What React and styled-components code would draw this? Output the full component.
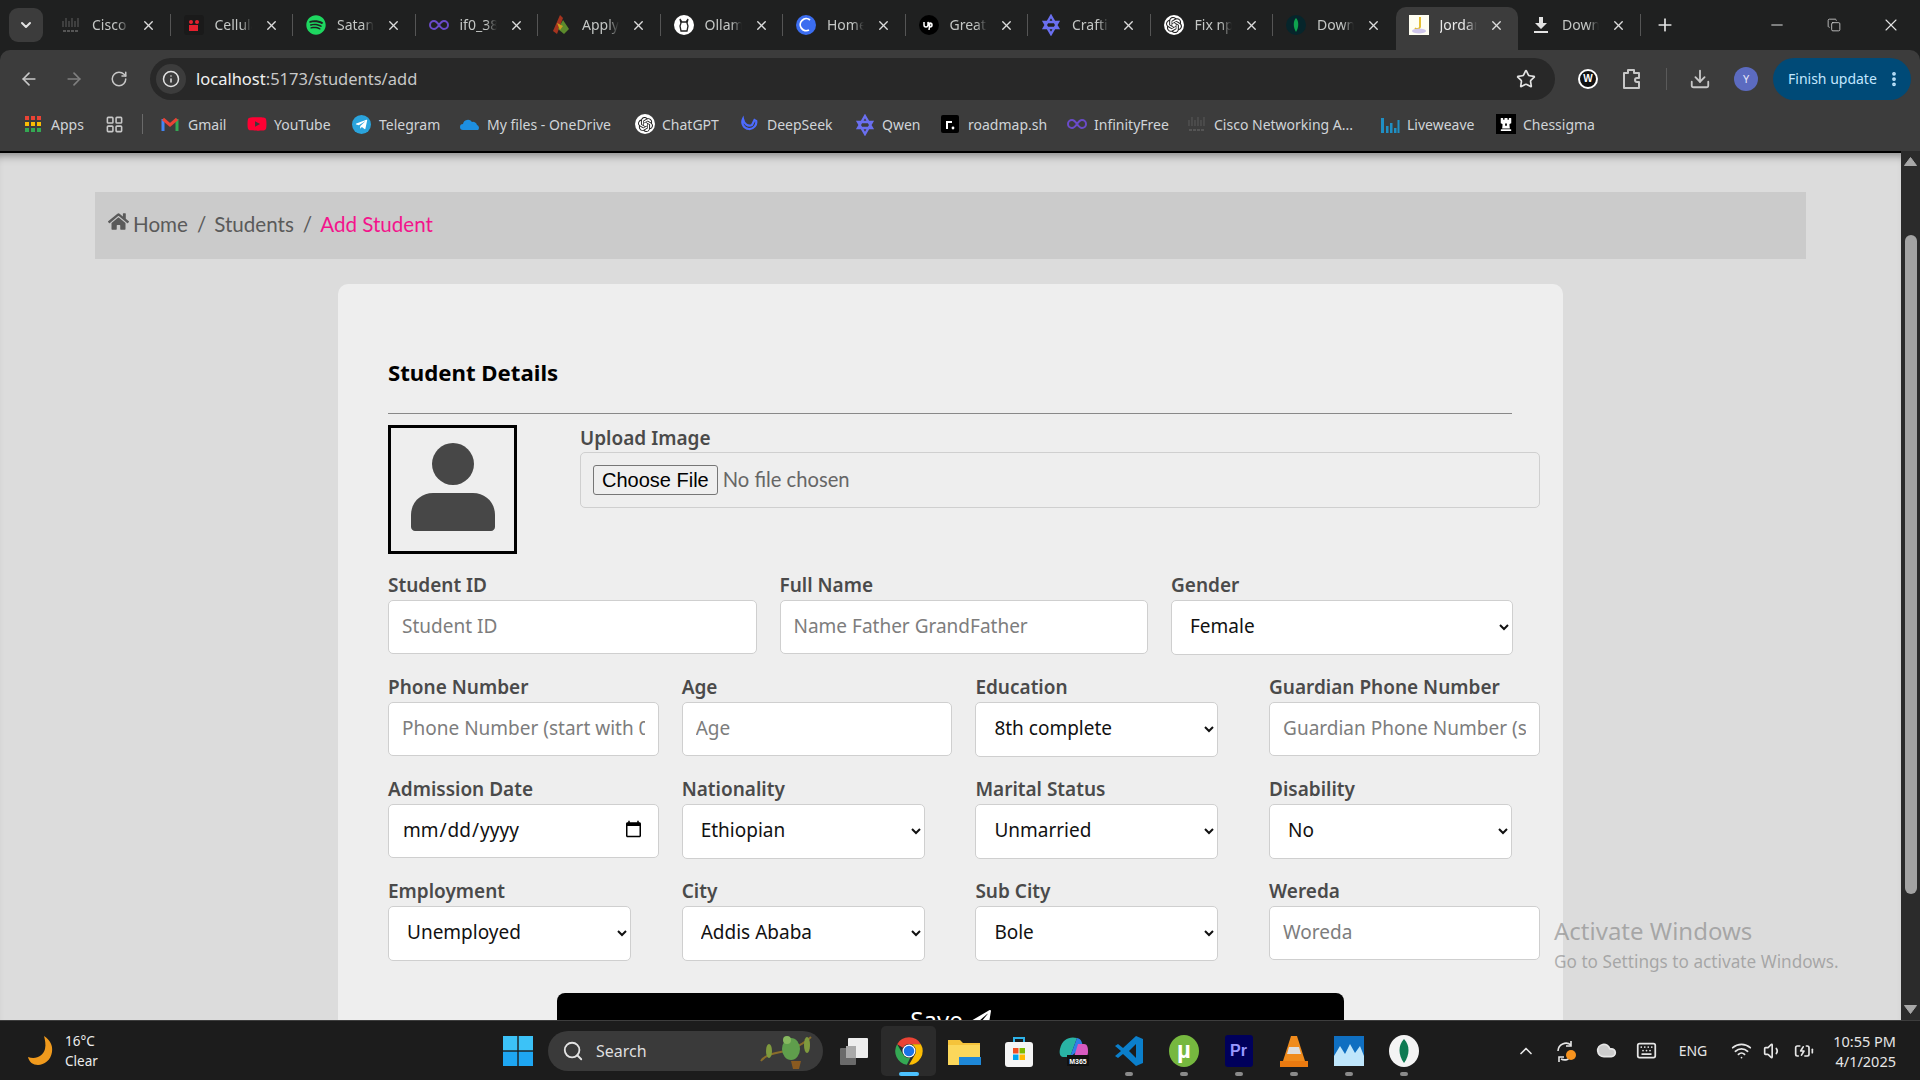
import React from "react";
import styled, { createGlobalStyle } from "styled-components";
import {
  ArrowLeft,
  ArrowRight,
  RotateCw,
  Info,
  Star,
  Download,
  EllipsisVertical,
  Minus,
  Copy,
  X,
  Plus,
  ChevronDown,
  ChevronUp,
  Search,
  Wifi,
  Volume1,
  Keyboard,
  Cloud,
  BatteryCharging,
  LayoutGrid,
} from "lucide-react";
import { FaHome, FaPaperPlane, FaSpotify, FaTelegramPlane, FaChessRook, FaYoutube } from "react-icons/fa";
import { SiOpenai } from "react-icons/si";

const Cisco = () => (
  <svg width="20" height="20" viewBox="0 0 20 20" stroke="#555" strokeWidth="1.2">
    {[2, 5, 8, 11, 14, 17].map((x, i) => (
      <line key={x} x1={x} x2={x} y1={i % 2 ? 3 : 6} y2="12" />
    ))}
    <line x1="2" x2="17" y1="16" y2="16" strokeDasharray="3 1" strokeWidth="2" />
  </svg>
);
const Cell = () => (
  <svg width="20" height="20" viewBox="0 0 20 20">
    <rect width="20" height="20" rx="3" fill="#1a1a1a" />
    <circle cx="7" cy="7" r="2" fill="#e5202e" />
    <circle cx="13" cy="7" r="2" fill="#e5202e" />
    <rect x="5" y="10" width="9" height="6" fill="#e5202e" />
  </svg>
);
const Infinity8 = () => (
  <svg width="20" height="20" viewBox="0 0 20 20" fill="none" stroke="#6a4bc9" strokeWidth="2">
    <path d="M10 10c-2-3-3-4-5-4a4 4 0 0 0 0 8c2 0 3-1 5-4s3-4 5-4a4 4 0 0 1 0 8c-2 0-3-1-5-4z" />
  </svg>
);
const ApplyLogo = () => (
  <svg width="20" height="22" viewBox="0 0 20 22">
    <path d="M9 1l3 3-6 16-4-3z" fill="#a5341f" />
    <path d="M12 6l6 9-5 5-6-5z" fill="#5c8a2c" />
    <path d="M6 9l6 3-3 4z" fill="#c9a020" />
  </svg>
);
const Ollama = () => (
  <svg width="20" height="20" viewBox="0 0 20 20">
    <circle cx="10" cy="10" r="10" fill="#fff" />
    <path d="M6 4l1 4-1 3 1 5h6l1-5-1-3 1-4-2 3H8z" fill="none" stroke="#222" strokeWidth="1.3" />
  </svg>
);
const Cohere = () => (
  <svg width="20" height="20" viewBox="0 0 20 20">
    <circle cx="10" cy="10" r="10" fill="#3b6df0" />
    <path d="M14 5a6 6 0 1 0-1 10" fill="none" stroke="#fff" strokeWidth="1.8" />
  </svg>
);
const Upwork = () => (
  <svg width="20" height="20" viewBox="0 0 20 20">
    <circle cx="10" cy="10" r="10" fill="#000" />
    <path d="M5 7v3a2 2 0 0 0 4 0V7l2 5a2 2 0 1 0 0-4l-1 7" fill="none" stroke="#fff" strokeWidth="1.5" />
  </svg>
);
const Qwen = () => (
  <svg width="20" height="22" viewBox="0 0 20 22" fill="none" stroke="#6a6ff0" strokeWidth="2.4">
    <path d="M10 2l7 12H3zM3 8h14l-7 12z" />
  </svg>
);
const Mongo = ({ size = 20, bg = "#06252b" }) => (
  <svg width={size} height={size} viewBox="0 0 20 20">
    <circle cx="10" cy="10" r="10" fill={bg} />
    <path d="M10 3c3 3 3 9 0 14c-3-5-3-11 0-14z" fill="#0fa34f" />
  </svg>
);
const Jordan = () => (
  <svg width="20" height="20" viewBox="0 0 20 20">
    <rect width="20" height="20" fill="#fffef2" />
    <path d="M11 2v10a3 3 0 0 1-5 1" fill="none" stroke="#e2b81f" strokeWidth="1.8" />
    <ellipse cx="10" cy="16" rx="7" ry="2.5" fill="#cfc6ea" />
  </svg>
);
const DownFav = () => (
  <svg width="20" height="20" viewBox="0 0 20 20" fill="#e3e3e3">
    <path d="M8 2h4v6h4l-6 6-6-6h4z" />
    <rect x="3" y="16" width="14" height="2" />
  </svg>
);

const tabs = [
  { title: "Cisco", icon: <Cisco /> },
  { title: "Cellular", icon: <Cell /> },
  { title: "Satan", icon: <FaSpotify size={20} color="#1ed760" /> },
  { title: "if0_38", icon: <Infinity8 /> },
  { title: "Apply", icon: <ApplyLogo /> },
  { title: "Ollama", icon: <Ollama /> },
  { title: "Home", icon: <Cohere /> },
  { title: "Great", icon: <Upwork /> },
  { title: "Crafting", icon: <Qwen /> },
  { title: "Fix npm", icon: <ChatGptFav><SiOpenai size={16} color="#222" /></ChatGptFav> },
  { title: "Down", icon: <Mongo />, plain: true },
  { title: "Jordan", icon: <Jordan />, active: true },
  { title: "Down", icon: <DownFav /> },
];

function ChatGptFav({ children }) {
  return <ChatGptDisc>{children}</ChatGptDisc>;
}

const AppsDots = () => (
  <svg width="18" height="18" viewBox="0 0 18 18">
    {[0, 1, 2].map((r) =>
      [0, 1, 2].map((c) => (
        <rect key={`${r}${c}`} x={1 + c * 6} y={1 + r * 6} width="4" height="4" fill={["#ea4335", "#fbbc04", "#34a853"][r]} />
      ))
    )}
  </svg>
);
const Gmail = () => (
  <svg width="18" height="18" viewBox="0 0 18 18" fill="none" strokeWidth="3">
    <path d="M2 16V4" stroke="#4285f4" />
    <path d="M16 16V4" stroke="#34a853" />
    <path d="M2 4l7 6 7-6" stroke="#ea4335" />
  </svg>
);
const OneDrive = () => (
  <svg width="20" height="16" viewBox="0 0 20 16">
    <path d="M3 14a3 3 0 0 1 0-6 5 5 0 0 1 9-2 4 4 0 0 1 5 3 3 3 0 0 1 1 5z" fill="#1d8fe1" />
  </svg>
);
const DeepSeek = () => (
  <svg width="18" height="18" viewBox="0 0 18 18" fill="none" stroke="#4d6bfe" strokeWidth="2.2">
    <path d="M16 5a7 7 0 1 1-13-1c1 5 5 8 9 6l3-6" />
  </svg>
);
const Roadmap = () => (
  <svg width="18" height="18" viewBox="0 0 18 18">
    <rect width="18" height="18" rx="2" fill="#000" />
    <path d="M6 14V7h5" fill="none" stroke="#fff" strokeWidth="2" />
    <circle cx="12" cy="13" r="1.4" fill="#fff" />
  </svg>
);
const Liveweave = () => (
  <svg width="20" height="18" viewBox="0 0 20 18" fill="#1f8fc4">
    <rect x="1" y="3" width="3" height="15" />
    <rect x="6" y="11" width="2.5" height="7" />
    <rect x="10" y="8" width="2.5" height="10" />
    <rect x="14" y="13" width="2.5" height="5" />
    <rect x="17.5" y="5" width="2" height="13" />
  </svg>
);
const ExtensionIcon = () => (
  <svg width="22" height="24" viewBox="0 0 22 24" fill="none" stroke="#c7c7c7" strokeWidth="2" strokeLinejoin="round">
    <path d="M3 6h4V3h6v3h5v5h-2a2 2 0 0 0 0 4h2v6H3z" />
  </svg>
);
const SyncIcon = () => (
  <svg width="22" height="24" viewBox="0 0 22 24" fill="none" stroke="#e6e6e6" strokeWidth="1.6">
    <path d="M3 12a8 8 0 0 1 13-6M16 2v5h-5" />
    <path d="M17 16a8 8 0 0 1-11 4M4 23v-5h5" />
    <circle cx="16" cy="16" r="5" fill="#f7931e" stroke="none" />
  </svg>
);
const TriangleUp = () => (
  <svg width="13" height="9" viewBox="0 0 13 9" fill="#a8a8a8">
    <path d="M6.5 0.5L12.5 8.5H0.5z" strokeLinejoin="round" stroke="#a8a8a8" />
  </svg>
);
const TriangleDown = () => (
  <svg width="13" height="9" viewBox="0 0 13 9" fill="#a8a8a8">
    <path d="M6.5 8.5L12.5 0.5H0.5z" strokeLinejoin="round" stroke="#a8a8a8" />
  </svg>
);

const bookmarks = [
  { label: "Apps", width: 81, icon: <AppsDots /> },
  { width: 37, icon: <LayoutGrid size={19} color="#c7c7c7" /> },
  { divider: true, width: 19 },
  { label: "Gmail", width: 86, icon: <Gmail /> },
  { label: "YouTube", width: 105, icon: <FaYoutube size={20} color="#ff0033" /> },
  { label: "Telegram", width: 108, icon: <TelegramRound /> },
  { label: "My files - OneDrive", width: 175, icon: <OneDrive /> },
  { label: "ChatGPT", width: 105, icon: <ChatGptFav><SiOpenai size={15} color="#222" /></ChatGptFav> },
  { label: "DeepSeek", width: 115, icon: <DeepSeek /> },
  { label: "Qwen", width: 86, icon: <Qwen /> },
  { label: "roadmap.sh", width: 126, icon: <Roadmap /> },
  { label: "InfinityFree", width: 120, icon: <Infinity8 /> },
  { label: "Cisco Networking A...", width: 193, icon: <Cisco /> },
  { label: "Liveweave", width: 116, icon: <Liveweave /> },
  { label: "Chessigma", width: 110, icon: <ChessMark /> },
];

function TelegramRound() {
  return <TelegramDisc><FaTelegramPlane size={13} color="#fff" /></TelegramDisc>;
}

function ChessMark() {
  return <ChessBox><FaChessRook size={14} /></ChessBox>;
}

const WinLogo = () => (
  <svg width="30" height="30" viewBox="0 0 30 30" fill="#3cc2f7">
    <rect width="14.3" height="14.3" />
    <rect x="15.7" width="14.3" height="14.3" />
    <rect y="15.7" width="14.3" height="14.3" fill="#1ea6f2" />
    <rect x="15.7" y="15.7" width="14.3" height="14.3" fill="#1ea6f2" />
  </svg>
);
const Moon = () => (
  <svg width="30" height="32" viewBox="0 0 30 32">
    <path d="M17 1c6 4 9 9 8 16-1 8-8 13-14 13C6 30 2 27 1 22c8 3 15-1 17-8 1-5 0-9-1-13z" fill="#f09a1d" />
  </svg>
);
const Frog = () => (
  <svg width="60" height="40" viewBox="0 0 60 40">
    <path d="M6 30C14 18 34 26 56 6" fill="none" stroke="#8a6d2a" strokeWidth="2" />
    <ellipse cx="14" cy="20" rx="3" ry="7" fill="#7f9a3e" />
    <ellipse cx="52" cy="14" rx="3" ry="8" fill="#7f9a3e" />
    <ellipse cx="36" cy="18" rx="9" ry="11" fill="#5f9e4c" />
    <circle cx="32" cy="9" r="4" fill="#86b85f" />
    <path d="M36 30h10l-2 8h-6z" fill="#8a5a20" />
  </svg>
);
const TaskView = () => (
  <svg width="30" height="30" viewBox="0 0 30 30">
    <rect x="1" y="12" width="16" height="17" rx="1" fill="#6a6a6a" />
    <rect x="9" y="2" width="20" height="20" rx="1" fill="#ededed" />
    <rect x="7" y="10" width="10" height="12" fill="#a9a9a9" />
  </svg>
);
const Chrome = () => (
  <svg width="30" height="30" viewBox="0 0 24 24">
    <path d="M12 1a11 11 0 0 1 9.5 5.5H12a5.5 5.5 0 0 0-4.8 2.8L2.5 6.5A11 11 0 0 1 12 1z" fill="#ea4335" />
    <path d="M2.5 6.5l4.8 8.3a5.5 5.5 0 0 0 5.7 2.6L10.3 23A11 11 0 0 1 2.5 6.5z" fill="#34a853" />
    <path d="M21.5 6.5H12a5.5 5.5 0 0 1 4.8 8.3L12 23a11 11 0 0 0 9.5-16.5z" fill="#fbbc04" />
    <circle cx="12" cy="12" r="5.2" fill="#fff" />
    <circle cx="12" cy="12" r="4.2" fill="#1a73e8" />
  </svg>
);
const Folder = () => (
  <svg width="34" height="30" viewBox="0 0 34 30">
    <path d="M1 4h12l3 3h17v22H1z" fill="#f5c33b" />
    <path d="M1 9h32v20H1z" fill="#fbd75b" />
    <rect x="12" y="21" width="22" height="8" fill="#1e88d8" />
  </svg>
);
const Store = () => (
  <svg width="30" height="32" viewBox="0 0 30 32">
    <path d="M10 8V3h10v5" fill="none" stroke="#2db2e8" strokeWidth="2" />
    <rect x="1" y="7" width="28" height="25" rx="3" fill="#f4f4f4" />
    <rect x="9" y="13" width="5.5" height="5.5" fill="#f25022" />
    <rect x="15.5" y="13" width="5.5" height="5.5" fill="#7fba00" />
    <rect x="9" y="19.5" width="5.5" height="5.5" fill="#00a4ef" />
    <rect x="15.5" y="19.5" width="5.5" height="5.5" fill="#ffb900" />
  </svg>
);
const Mini = styled.text`
  fill: #fff;
  font: 700 7px "Liberation Sans", sans-serif;
  text-anchor: middle;
`;
const M365 = () => (
  <svg width="32" height="32" viewBox="0 0 32 32">
    <path d="M2 14C4 4 12 1 19 3L12 22H5C2 22 1 18 2 14z" fill="#29b4a5" />
    <path d="M19 3c5 1 5 5 6 9L12 22z" fill="#2f7fe6" />
    <path d="M20 9h6c4 0 4 5 4 8s-2 8-7 8h-8z" fill="#d75ac0" />
    <rect x="9" y="20" width="22" height="11" fill="#111" />
    <Mini x="20" y="28.5">M365</Mini>
  </svg>
);
const VSCode = () => (
  <svg width="30" height="30" viewBox="0 0 30 30">
    <path d="M22 0l7 3v24l-7 3L9 18l-5 4-3-2 6-5-6-5 3-2 5 4z" fill="#0b7fcb" />
    <path d="M22 8l-7 7 7 7z" fill="#1c1c1c" />
  </svg>
);
const UGlyph = styled.text`
  fill: #fff;
  font: 700 24px "Liberation Sans", sans-serif;
  text-anchor: middle;
`;
const UTorrent = () => (
  <svg width="30" height="32" viewBox="0 0 30 32">
    <ellipse cx="15" cy="16" rx="15" ry="16" fill="#76b83f" />
    <UGlyph x="15" y="23">µ</UGlyph>
  </svg>
);
const Premiere = styled.span`
  width: 28px;
  height: 32px;
  border-radius: 3px;
  background: #00005b;
  color: #9999ff;
  font: 700 16px/32px "Liberation Sans", sans-serif;
  text-align: center;
`;
const Vlc = () => (
  <svg width="28" height="32" viewBox="0 0 28 32">
    <path d="M11 1h6l8 25H3z" fill="#f08b1c" />
    <path d="M9 12h10l2 7H7z" fill="#ddd" />
    <rect y="26" width="28" height="6" fill="#ea7a10" />
  </svg>
);
const AppWave = () => (
  <svg width="30" height="30" viewBox="0 0 30 30">
    <rect width="30" height="30" fill="#bfe6fb" />
    <path d="M0 0h30v20l-4-10-5 7-5-9-5 10-5-8-6 10z" fill="#0f6fc1" />
  </svg>
);
const MongoTask = () => (
  <svg width="30" height="32" viewBox="0 0 30 32">
    <ellipse cx="15" cy="16" rx="15" ry="16" fill="#f4f4f4" />
    <path d="M15 4c6 6 6 16 0 24c-6-8-6-18 0-24z" fill="#0e7a52" />
  </svg>
);

const taskIcons = [
  { icon: <TaskView /> },
  { icon: <Chrome />, state: "active" },
  { icon: <Folder /> },
  { icon: <Store /> },
  { icon: <M365 /> },
  { icon: <VSCode />, state: "open" },
  { icon: <UTorrent />, state: "open" },
  { icon: <PremiereMark />, state: "open" },
  { icon: <Vlc />, state: "open" },
  { icon: <AppWave />, state: "open" },
  { icon: <MongoTask />, state: "open" },
];

function PremiereMark() {
  return <Premiere>Pr</Premiere>;
}

const studentRows = [
  [
    { label: "Student ID", placeholder: "Student ID" },
    { label: "Full Name", placeholder: "Name Father GrandFather" },
    { label: "Gender", options: ["Female"], width: "92.8%" },
  ],
  [
    { label: "Phone Number", placeholder: "Phone Number (start with 0)" },
    { label: "Age", placeholder: "Age" },
    { label: "Education", options: ["8th complete"] },
    { label: "Guardian Phone Number", placeholder: "Guardian Phone Number (start with 0)" },
  ],
  [
    { label: "Admission Date", type: "date" },
    { label: "Nationality", options: ["Ethiopian"] },
    { label: "Marital Status", options: ["Unmarried"] },
    { label: "Disability", options: ["No"] },
  ],
  [
    { label: "Employment", options: ["Unemployed"] },
    { label: "City", options: ["Addis Ababa"] },
    { label: "Sub City", options: ["Bole"] },
    { label: "Wereda", placeholder: "Woreda" },
  ],
];

const App = () => {
  return (
    <Screen>
      <GlobalStyle />
      <TabStrip>
        <TabSearch><ChevronDown size={16} strokeWidth={3} /></TabSearch>
        {tabs.map((tab, index) => (
          <Tab key={index} $active={tab.active} $plain={tab.plain}>
            <FavSlot>{tab.icon}</FavSlot>
            <TabTitle $active={tab.active}>{tab.title}</TabTitle>
            <TabClose><X size={15} strokeWidth={2.2} /></TabClose>
          </Tab>
        ))}
        <NewTab><Plus size={20} /></NewTab>
        <WindowControls>
          <WindowButton><Minus size={18} strokeWidth={1.3} /></WindowButton>
          <WindowButton><Copy size={14} strokeWidth={1.3} /></WindowButton>
          <WindowButton><X size={20} strokeWidth={1.3} /></WindowButton>
        </WindowControls>
      </TabStrip>

      <Toolbar>
        <NavButton><ArrowLeft size={20} /></NavButton>
        <NavButton $dim><ArrowRight size={20} /></NavButton>
        <NavButton><RotateCw size={18} /></NavButton>
        <AddressBar>
          <InfoBadge><Info size={18} /></InfoBadge>
          <Url><b>localhost</b>:5173/students/add</Url>
          <Star size={20} color="#e3e3e3" />
        </AddressBar>
        <ToolbarIcons>
          <WBadge>W</WBadge>
          <ExtensionIcon />
          <ToolDivider />
          <Download size={22} color="#c7c7c7" />
          <Avatar>Y</Avatar>
        </ToolbarIcons>
        <UpdatePill>
          <span>Finish update</span>
          <EllipsisVertical size={18} strokeWidth={3} />
        </UpdatePill>
      </Toolbar>

      <BookmarkBar>
        {bookmarks.map((item, index) =>
          item.divider ? (
            <BookmarkDivider key={index} $width={item.width} />
          ) : (
            <Bookmark key={index} $width={item.width}>
              <BookmarkIcon>{item.icon}</BookmarkIcon>
              {item.label}
            </Bookmark>
          )
        )}
      </BookmarkBar>

      <Viewport>
        <Page>
          <Breadcrumb>
            <FaHome size={21} />
            <Crumb>Home</Crumb>
            <Slash>/</Slash>
            <Crumb>Students</Crumb>
            <Slash>/</Slash>
            <CrumbActive>Add Student</CrumbActive>
          </Breadcrumb>

          <Card>
            <Heading>Student Details</Heading>
            <Divider />
            <UploadRow>
              <PhotoBox>
                <svg width="84" height="88" viewBox="0 0 84 88" fill="#474747">
                  <ellipse cx="42" cy="21" rx="21" ry="21" />
                  <path d="M0 84V72c0-13 10-22 22-22h40c12 0 22 9 22 22v12c0 2-2 4-4 4H4c-2 0-4-2-4-4z" />
                </svg>
              </PhotoBox>
              <UploadField>
                <UploadLabel>Upload Image</UploadLabel>
                <FileInput type="file" />
              </UploadField>
            </UploadRow>

            {studentRows.map((row, rowIndex) => (
              <FormRow key={rowIndex} $cols={row.length}>
                {row.map((field) => (
                  <Field key={field.label}>
                    <Label>{field.label}</Label>
                    {field.options ? (
                      <Select $width={field.width} defaultValue={field.options[0]}>
                        {field.options.map((option) => (
                          <option key={option}>{option}</option>
                        ))}
                      </Select>
                    ) : (
                      <Input type={field.type || "text"} placeholder={field.placeholder} />
                    )}
                  </Field>
                ))}
              </FormRow>
            ))}

            <SaveButton>
              Save <FaPaperPlane size={19} />
            </SaveButton>
          </Card>
          <Watermark>
            <WatermarkTitle>Activate Windows</WatermarkTitle>
            Go to Settings to activate Windows.
          </Watermark>
        </Page>
        <Scrollbar>
          <TriangleUp />
          <Thumb />
          <TriangleDown />
        </Scrollbar>
      </Viewport>

      <Taskbar>
        <Weather>
          <Moon />
          <WeatherText>
            <span>16°C</span>
            <span>Clear</span>
          </WeatherText>
        </Weather>
        <TaskSlot><WinLogo /></TaskSlot>
        <SearchPill>
          <Search size={22} color="#e3e3e3" />
          <SearchText>Search</SearchText>
          <Frog />
        </SearchPill>
        {taskIcons.map((item, index) => (
          <TaskSlot key={index} $state={item.state}>
            {item.icon}
          </TaskSlot>
        ))}
        <Tray>
          <TrayItem $width={40}><ChevronUp size={20} /></TrayItem>
          <TrayItem $width={40}><SyncIcon /></TrayItem>
          <TrayItem $width={40}><Cloud size={21} fill="#ccc" /></TrayItem>
          <TrayItem $width={40}><Keyboard size={21} /></TrayItem>
          <TrayItem $width={54}>ENG</TrayItem>
          <TrayItem $width={42}><Wifi size={21} /></TrayItem>
          <TrayItem $width={22}><Volume1 size={20} /></TrayItem>
          <TrayItem $width={40}><BatteryCharging size={20} /></TrayItem>
          <Clock>
            <span>10:55 PM</span>
            <span>4/1/2025</span>
          </Clock>
        </Tray>
      </Taskbar>
    </Screen>
  );
};

const GlobalStyle = createGlobalStyle`
  html, body {
    margin: 0;
    height: 100%;
    overflow: hidden;
  }
  * {
    box-sizing: border-box;
  }
`;

const Screen = styled.div`
  width: 1920px;
  height: 1080px;
  display: flex;
  flex-direction: column;
  overflow: hidden;
  font-family: "Noto Sans", sans-serif;
  background: #1f2020;
`;

const TabStrip = styled.div`
  height: 50px;
  flex: none;
  display: flex;
  align-items: flex-end;
  padding-left: 48px;
  background: #1f2020;
  position: relative;
`;

const TabSearch = styled.div`
  position: absolute;
  left: 9px;
  top: 8px;
  width: 34px;
  height: 34px;
  border-radius: 9px;
  background: #3c3c3c;
  color: #e3e3e3;
  display: grid;
  place-items: center;
`;

const Tab = styled.div`
  width: 122.5px;
  height: 43px;
  flex: none;
  display: flex;
  align-items: center;
  padding: 0 0 7px 13px;
  position: relative;
  border-radius: 10px 10px 0 0;
  background: ${(p) => (p.$active ? "#3c3c3c" : "transparent")};
  ${(p) =>
    !p.$active && !p.$plain
      ? `&::after {
    content: "";
    position: absolute;
    right: 0;
    top: 7px;
    height: 22px;
    width: 1px;
    background: #555;
  }`
      : ""}
`;

const FavSlot = styled.span`
  width: 20px;
  height: 22px;
  flex: none;
  display: grid;
  place-items: center;
`;

const TabTitle = styled.span`
  width: 37px;
  margin: -2px 0 0 11px;
  flex: none;
  overflow: hidden;
  white-space: nowrap;
  font-size: 14px;
  color: ${(p) => (p.$active ? "#e8e8e8" : "#c4c7c5")};
  -webkit-mask-image: linear-gradient(to right, #000 70%, transparent);
  mask-image: linear-gradient(to right, #000 70%, transparent);
`;

const TabClose = styled.span`
  margin-left: 12px;
  color: #dcdcdc;
  display: grid;
  place-items: center;
`;

const NewTab = styled.div`
  margin-left: 14px;
  height: 43px;
  padding-bottom: 7px;
  color: #e3e3e3;
  display: flex;
  align-items: center;
`;

const WindowControls = styled.div`
  margin-left: auto;
  height: 50px;
  display: flex;
  align-items: center;
  padding-right: 1px;
  color: #e3e3e3;
`;

const WindowButton = styled.span`
  width: 57px;
  display: grid;
  place-items: center;
`;

const Toolbar = styled.div`
  height: 50px;
  flex: none;
  display: flex;
  align-items: flex-start;
  padding: 8px 8px 0 6px;
  background: #3c3c3c;
  border-radius: 10px 10px 0 0;
`;

const NavButton = styled.span`
  width: 45px;
  height: 42px;
  flex: none;
  display: grid;
  place-items: center;
  color: ${(p) => (p.$dim ? "#7f7f7f" : "#c7c7c7")};
`;

const AddressBar = styled.div`
  width: 1405px;
  height: 42px;
  margin-left: 9px;
  flex: none;
  display: flex;
  align-items: center;
  padding: 0 19px 0 6px;
  border-radius: 21px;
  background: #282828;
`;

const InfoBadge = styled.span`
  width: 30px;
  height: 30px;
  border-radius: 50%;
  background: #3c3c3c;
  color: #e3e3e3;
  display: grid;
  place-items: center;
`;

const Url = styled.span`
  flex: 1;
  margin: -2px 0 0 10px;
  font-size: 16.5px;
  color: #c7c7c7;
  b {
    font-weight: 400;
    color: #f1f1f1;
  }
`;

const ToolbarIcons = styled.div`
  width: 219px;
  height: 42px;
  flex: none;
  display: flex;
  align-items: center;
  padding: 0 16px 0 23px;
  justify-content: space-between;
`;

const WBadge = styled.span`
  width: 20px;
  height: 20px;
  border-radius: 50%;
  border: 2px solid #fff;
  background: #111;
  color: #fff;
  font: 700 10px/16px "Liberation Sans", sans-serif;
  text-align: center;
`;

const ToolDivider = styled.span`
  width: 1px;
  height: 22px;
  background: #5a5a5a;
`;

const Avatar = styled.span`
  width: 24px;
  height: 24px;
  border-radius: 50%;
  background: #5c6bc0;
  color: #e6e6fa;
  font-size: 11px;
  line-height: 24px;
  text-align: center;
`;

const UpdatePill = styled.span`
  width: 138px;
  height: 42px;
  margin-left: -1px;
  flex: none;
  display: flex;
  align-items: center;
  justify-content: space-between;
  padding: 0 8px 0 15px;
  border-radius: 21px;
  background: #004a77;
  color: #c2e7ff;
  font-size: 14px;
  span {
    margin-top: -2px;
  }
`;

const BookmarkBar = styled.div`
  height: 51px;
  flex: none;
  display: flex;
  align-items: center;
  padding: 0 0 3px 24px;
  background: #3c3c3c;
`;

const Bookmark = styled.span`
  width: ${(p) => p.$width}px;
  flex: none;
  display: flex;
  align-items: center;
  gap: 9px;
  font-size: 14px;
  color: #d0d4d8;
  white-space: nowrap;
`;

const BookmarkIcon = styled.span`
  width: 18px;
  height: 20px;
  flex: none;
  display: grid;
  place-items: center;
`;

const TelegramDisc = styled.span`
  width: 19px;
  height: 19px;
  border-radius: 50%;
  background: #2aa4dd;
  display: grid;
  place-items: center;
`;

const ChatGptDisc = styled.span`
  width: 20px;
  height: 20px;
  border-radius: 50%;
  background: #fff;
  display: grid;
  place-items: center;
`;

const ChessBox = styled.span`
  width: 20px;
  height: 20px;
  background: #000;
  color: #fff;
  display: grid;
  place-items: center;
`;

const BookmarkDivider = styled.span`
  width: ${(p) => p.$width}px;
  height: 20px;
  flex: none;
  &::before {
    content: "";
    display: block;
    width: 1px;
    height: 20px;
    background: #6a6a6a;
  }
`;

const Viewport = styled.div`
  flex: 1;
  min-height: 0;
  display: flex;
  background: #dcdcdc;
`;

const Page = styled.main`
  flex: 1;
  min-width: 0;
  overflow: hidden;
  position: relative;
  padding: 39px 95px 0 95px;
  border-top: 2px solid #000;
  background: #dcdcdc;
  box-shadow: inset 0 9px 8px -6px #8a8a8a;
`;

const Breadcrumb = styled.nav`
  height: 67px;
  display: flex;
  align-items: center;
  padding: 0 0 3px 13px;
  background: #cbcbcb;
  color: #5a5a5a;
  font-family: Lato, sans-serif;
  font-size: 20.6px;
  svg {
    margin-top: -5px;
  }
`;

const Crumb = styled.span`
  margin-left: 4px;
`;

const Slash = styled.span`
  margin: 0 4px 0 9px;
`;

const CrumbActive = styled.span`
  margin-left: 4px;
  color: #f3148c;
`;

const Card = styled.section`
  width: 1225px;
  margin: 25px 0 0 243px;
  padding: 75px 0 0 50px;
  border-radius: 10px;
  background: #eeeeee;
  font-family: "Noto Sans", sans-serif;
`;

const Heading = styled.h2`
  margin: 0;
  height: 28px;
  font-size: 22.2px;
  line-height: 28px;
  font-weight: 700;
  color: #000;
`;

const Divider = styled.hr`
  width: 1124px;
  height: 1px;
  margin: 26px 0 11px;
  border: 0;
  background: #888;
`;

const UploadRow = styled.div`
  width: 1152px;
  display: flex;
  gap: 63px;
  margin-bottom: 22px;
`;

const PhotoBox = styled.div`
  width: 129px;
  height: 129px;
  flex: none;
  display: flex;
  justify-content: center;
  padding-top: 15px;
  border: 3px solid #000;
`;

const UploadField = styled.div`
  flex: 1;
  padding-top: 3px;
`;

const Label = styled.label`
  display: block;
  height: 20px;
  margin-bottom: 4px;
  font-size: 19px;
  line-height: 18px;
  font-weight: 600;
  color: #4a4a4a;
`;

const UploadLabel = styled(Label)`
  line-height: 20px;
`;

const FileInput = styled.input`
  display: block;
  width: 100%;
  height: 56px;
  padding: 12px;
  border: 1px solid #cfcfcf;
  border-radius: 5px;
  background: #eeeeee;
  color: #666;
  font-family: Lato, sans-serif;
  font-size: 20.2px;
  &::file-selector-button {
    height: 30px;
    margin-right: 5px;
    padding: 0 8px;
    border: 1px solid #767676;
    border-radius: 3px;
    background: #efefef;
    color: #000;
    font: 20px "Liberation Sans", sans-serif;
  }
`;

const FormRow = styled.div`
  display: grid;
  grid-template-columns: repeat(${(p) => p.$cols}, ${(p) => (p.$cols === 3 ? "391.5px" : "293.7px")});
  grid-auto-rows: 78px;
  margin-bottom: 24px;
`;

const Field = styled.div`
  padding-right: 23px;
`;

const controlStyle = `
  display: block;
  border: 1px solid #cfcfcf;
  border-radius: 5px;
  background: #fff;
  font-family: "Noto Sans", sans-serif;
  font-size: 19px;
  color: #111;
  outline: none;
`;

const Input = styled.input`
  ${controlStyle}
  width: 100%;
  height: 54px;
  padding: 0 13px 3px;
  &::placeholder {
    color: #7d7d7d;
    opacity: 1;
  }
`;

const Select = styled.select`
  ${controlStyle}
  width: ${(p) => p.$width || "89.8%"};
  height: 55px;
  padding: 0 0 3px 14px;
`;

const SaveButton = styled.button`
  display: flex;
  align-items: center;
  justify-content: center;
  gap: 9px;
  width: 787px;
  height: 52px;
  margin: 33px 0 0 169px;
  border: 0;
  border-radius: 8px;
  background: #000;
  color: #fff;
  font-family: "Noto Sans", sans-serif;
  font-size: 24px;
`;

const Watermark = styled.div`
  position: absolute;
  left: 1554px;
  top: 762px;
  color: rgba(120, 120, 120, 0.55);
  font-size: 17.2px;
  line-height: 30px;
  white-space: nowrap;
`;

const WatermarkTitle = styled.div`
  font-size: 24px;
  line-height: 32px;
`;

const Scrollbar = styled.div`
  width: 19px;
  flex: none;
  display: flex;
  flex-direction: column;
  align-items: center;
  background: #2b2b2b;
  padding: 6px 0 6px;
  svg:last-child {
    margin-top: auto;
  }
`;

const Thumb = styled.div`
  width: 12px;
  height: 659px;
  margin-top: 69px;
  border-radius: 6px;
  background: #a3a3a3;
`;

const Taskbar = styled.footer`
  height: 60px;
  flex: none;
  display: flex;
  align-items: center;
  border-top: 1px solid #3d3d3d;
  background: #1c1c1c;
  color: #ececec;
  font-family: "Noto Sans", sans-serif;
`;

const Weather = styled.div`
  width: 490px;
  flex: none;
  display: flex;
  align-items: center;
  gap: 8px;
  padding-left: 27px;
`;

const WeatherText = styled.div`
  display: flex;
  flex-direction: column;
  font-size: 13.5px;
  line-height: 20px;
`;

const TaskSlot = styled.div`
  width: 55px;
  height: 50px;
  flex: none;
  display: grid;
  place-items: center;
  position: relative;
  border-radius: 5px;
  background: ${(p) => (p.$state === "active" ? "#2b2b2b" : "transparent")};
  &::after {
    content: "";
    display: ${(p) => (p.$state ? "block" : "none")};
    position: absolute;
    bottom: 0;
    left: 50%;
    transform: translateX(-50%);
    width: ${(p) => (p.$state === "active" ? "20px" : "8px")};
    height: 4px;
    border-radius: 2px;
    background: ${(p) => (p.$state === "active" ? "#4cc2ff" : "#8a8a8a")};
  }
`;

const SearchPill = styled.div`
  width: 275px;
  height: 40px;
  margin: 0 3px;
  flex: none;
  display: flex;
  align-items: center;
  gap: 12px;
  padding: 0 8px 0 14px;
  border-radius: 20px;
  background: #3a3a3a;
`;

const SearchText = styled.span`
  flex: 1;
  font-size: 16px;
  color: #dfdfdf;
`;

const Tray = styled.div`
  margin-left: auto;
  display: flex;
  align-items: center;
  padding-right: 24px;
  color: #e6e6e6;
`;

const TrayItem = styled.span`
  width: ${(p) => p.$width}px;
  flex: none;
  display: grid;
  place-items: center;
  font-size: 14px;
`;

const Clock = styled.div`
  width: 62px;
  margin-left: 10px;
  display: flex;
  flex-direction: column;
  align-items: flex-end;
  font-size: 14.5px;
  line-height: 20px;
  white-space: nowrap;
`;

export default App;
